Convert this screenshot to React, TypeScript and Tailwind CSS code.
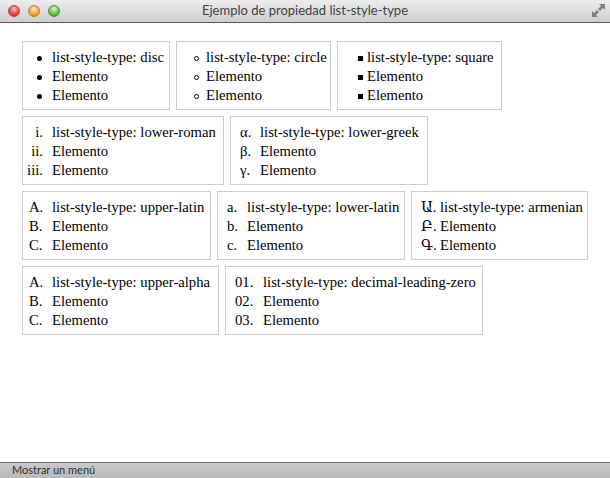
import React from 'react'

type Item = { m: React.ReactNode; t: string }
type Box = { w: string; mk: string; tx: string; items: Item[] }

const Disc = () => <span className="inline-block w-[5px] h-[5px] rounded-full bg-black mt-[1px]" />
const Circ = () => <span className="inline-block w-[5px] h-[5px] rounded-full border border-black mt-[1px]" />
const Sq = () => <span className="inline-block w-[5px] h-[5px] bg-black mt-[1px]" />

const three = (title: string, ms: React.ReactNode[]) => [
  { m: ms[0], t: title },
  { m: ms[1], t: 'Elemento' },
  { m: ms[2], t: 'Elemento' },
]

// marker column classes (width, alignment) and text offset classes per box
const RIGHT19 = 'w-[19px] justify-end'
const LEFT = 'w-[19px] justify-start pl-[9px]'

const ROWS: Box[][] = [
  [
    { w: 'w-[148px]', mk: RIGHT19, tx: 'ml-[10px]', items: three('list-style-type: disc', [<Disc />, <Disc />, <Disc />]) },
    { w: 'w-[155px]', mk: 'w-[22px] justify-end', tx: 'ml-[7px]', items: three('list-style-type: circle', [<Circ />, <Circ />, <Circ />]) },
    { w: 'w-[165px]', mk: 'w-[25px] justify-end', tx: 'ml-[4px]', items: three('list-style-type: square', [<Sq />, <Sq />, <Sq />]) },
  ],
  [
    { w: 'w-[202px]', mk: 'w-[20px] justify-end', tx: 'ml-[9px]', items: three('list-style-type: lower-roman', ['i.', 'ii.', 'iii.']) },
    { w: 'w-[198px]', mk: LEFT, tx: 'ml-[10px]', items: three('list-style-type: lower-greek', ['α.', 'β.', 'γ.']) },
  ],
  [
    { w: 'w-[189px]', mk: 'w-[19px] justify-start pl-[6px]', tx: 'ml-[10px]', items: three('list-style-type: upper-latin', ['A.', 'B.', 'C.']) },
    { w: 'w-[188px]', mk: LEFT, tx: 'ml-[10px]', items: three('list-style-type: lower-latin', ['a.', 'b.', 'c.']) },
    { w: 'w-[177px]', mk: 'w-[18px] justify-start pl-[9px]', tx: 'ml-[10px]', items: three('list-style-type: armenian', ['Ա.', 'Բ.', 'Գ.']) },
  ],
  [
    { w: 'w-[197px]', mk: 'w-[19px] justify-start pl-[6px]', tx: 'ml-[10px]', items: three('list-style-type: upper-alpha', ['A.', 'B.', 'C.']) },
    { w: 'w-[258px]', mk: 'w-[28px] justify-start pl-[9px]', tx: 'ml-[9px]', items: three('list-style-type: decimal-leading-zero', ['01.', '02.', '03.']) },
  ],
]

function ListBox({ box }: { box: Box }) {
  return (
    <div className={`${box.w} border border-[#cccccc] pt-[6px] pb-[4px] shrink-0`}>
      {box.items.map((it, i) => (
        <div key={i} className="flex items-center h-[19px] whitespace-nowrap">
          <span className={`shrink-0 flex items-center ${box.mk}`}>{it.m}</span>
          <span className={box.tx}>{it.t}</span>
        </div>
      ))}
    </div>
  )
}

function Light({ cls }: { cls: string }) {
  return <span className={`inline-block w-[12px] h-[12px] rounded-full ${cls}`} />
}

export default function App() {
  return (
    <div className="w-[610px] h-[478px] flex flex-col bg-white overflow-hidden">
      <div className="relative h-[23px] shrink-0 border-b border-[#575757] bg-[linear-gradient(#ededed,#cfcfcf)] flex items-center">
        <div className="flex items-center gap-[8px] pl-[8px]">
          <Light cls="bg-[radial-gradient(circle_at_50%_30%,#ffc2bd,#ec4b43_55%,#b3221c)] border border-[#b4453e]" />
          <Light cls="bg-[radial-gradient(circle_at_50%_30%,#ffe9b8,#f5a93a_55%,#c77d17)] border border-[#b68234]" />
          <Light cls="bg-[radial-gradient(circle_at_50%_30%,#d9f8c6,#6bc34a_55%,#3b8d25)] border border-[#4b8c3a]" />
        </div>
        <div className="absolute inset-0 flex items-center justify-center text-[13px] text-[#3d3d3d] pb-[1px] font-['Lato','Open_Sans',sans-serif]">
          Ejemplo de propiedad list-style-type
        </div>
        <svg className="absolute right-[4px] top-[3px]" width="15" height="15" viewBox="0 0 15 15">
          <path d="M14 1 L14 7 L12 5 L9 8 L7 6 L10 3 L8 1 Z" fill="#808080" />
          <path d="M1 14 L1 8 L3 10 L6 7 L8 9 L5 12 L7 14 Z" fill="#808080" />
        </svg>
      </div>

      <div className="flex-1 pl-[22px] pt-[18px] flex flex-col gap-[6px] text-[14.67px] leading-[19px] text-black font-['Liberation_Serif','DejaVu_Serif',serif]">
        {ROWS.map((row, r) => (
          <div key={r} className="flex gap-[6px]">
            {row.map((b, i) => <ListBox key={i} box={b} />)}
          </div>
        ))}
      </div>

      <div className="h-[16px] shrink-0 border-t border-[#6a6a6a] bg-[linear-gradient(#c9c9c9,#b9b9b9)] flex items-center pl-[12px] text-[11px] text-[#2e2e2e] font-['Lato','Open_Sans',sans-serif]">
        Mostrar un menú
      </div>
    </div>
  )
}
